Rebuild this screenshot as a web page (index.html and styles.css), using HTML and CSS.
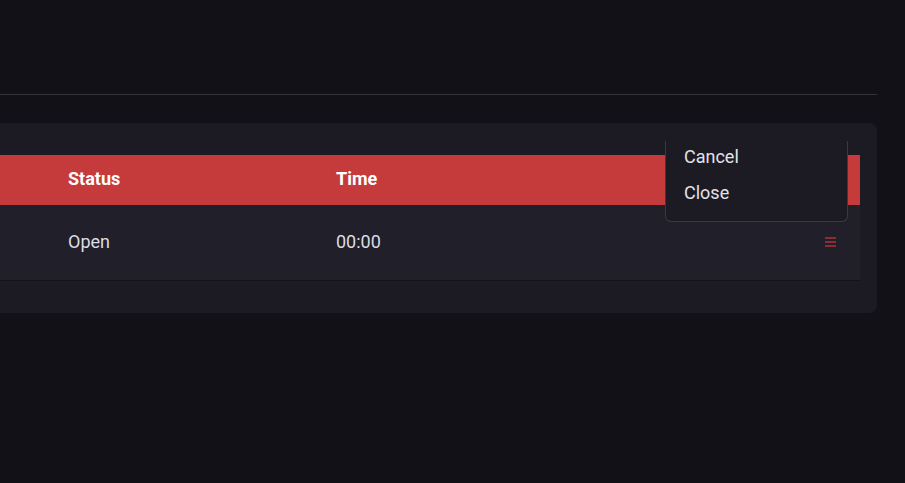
FILE: index.html
```html
<!DOCTYPE html>
<html lang="en">
<head>
<meta charset="utf-8">
<title>Table</title>
<link rel="stylesheet" href="styles.css">
</head>
<body>
<div class="page">
  <div class="divider"></div>
  <div class="card">
    <div class="table">
      <div class="row head">
        <div class="cell"></div>
        <div class="cell">Status</div>
        <div class="cell">Time</div>
        <div class="cell actions"></div>
      </div>
      <div class="row body-row">
        <div class="cell"></div>
        <div class="cell">Open</div>
        <div class="cell">00:00</div>
        <div class="cell actions">
          <svg class="menu-icon" width="11" height="10" viewBox="0 0 11 10" aria-hidden="true">
            <rect x="0" y="0" width="11" height="2" fill="#8f2b31"/>
            <rect x="0" y="4" width="11" height="2" fill="#8f2b31"/>
            <rect x="0" y="8" width="11" height="2" fill="#8f2b31"/>
          </svg>
        </div>
      </div>
    </div>
    <div class="dropdown">
      <div class="dropdown-item">Cancel</div>
      <div class="dropdown-item">Close</div>
    </div>
  </div>
</div>
</body>
</html>
```
FILE: styles.css
```css
html, body {
  margin: 0;
  padding: 0;
  background: #121117;
  font-family: Roboto, "Liberation Sans", sans-serif;
  font-size: 18px;
  overflow: hidden;
}

.page {
  margin-left: -120px;
  width: 997px;
  padding-top: 94px;
}

.divider {
  height: 1px;
  background: #34333a;
}

.card {
  position: relative;
  margin-top: 28px;
  background: #1c1b23;
  border-radius: 8px;
  padding: 32px 17px 32px 0;
}

.table {
  display: flex;
  flex-direction: column;
}

.row {
  display: grid;
  grid-template-columns: 164px 268px 1fr 60px;
  align-items: center;
  box-sizing: border-box;
}

.cell {
  padding-left: 24px;
}

.head {
  height: 50px;
  padding-bottom: 4px;
  background: #c53a3a;
  color: #ffffff;
  font-weight: 700;
}

.body-row {
  height: 76px;
  padding-bottom: 2px;
  background: #211f29;
  border-bottom: 1px solid #141319;
  color: #dcdce4;
}

.actions {
  display: flex;
  justify-content: flex-end;
  padding-right: 24px;
  padding-left: 0;
}

.menu-icon {
  display: block;
}

.dropdown {
  position: absolute;
  top: 18px;
  right: 29px;
  width: 181px;
  background: #1c1b23;
  border: 1px solid #3a3942;
  border-top: none;
  border-radius: 0 0 6px 6px;
  padding-bottom: 12px;
  display: flex;
  flex-direction: column;
  gap: 4px;
}

.dropdown-item {
  height: 32px;
  line-height: 32px;
  padding-left: 18px;
  color: #e2e2ea;
}
```
